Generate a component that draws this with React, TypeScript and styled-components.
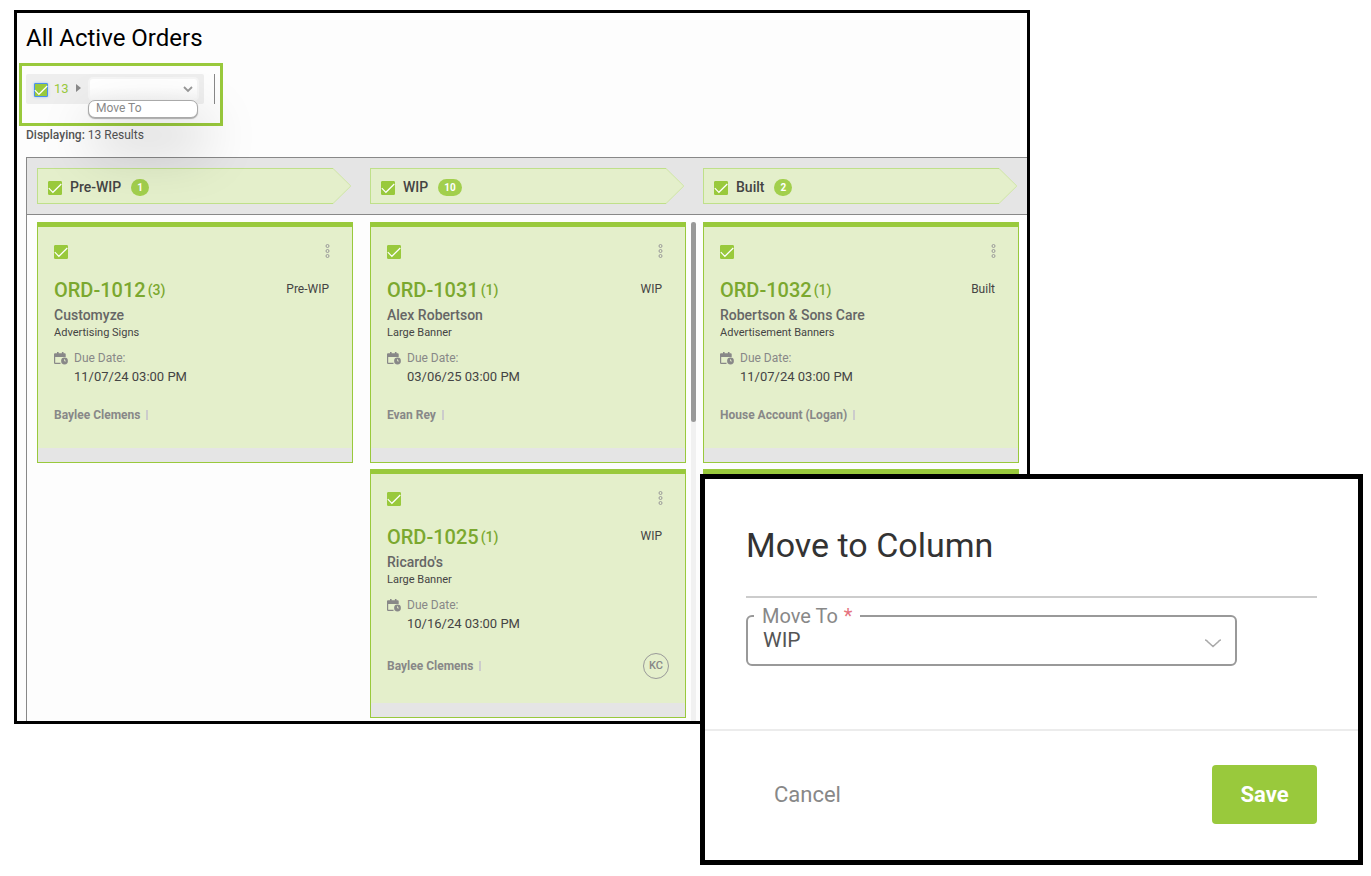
import React from "react";
import styled, { createGlobalStyle } from "styled-components";

const GlobalStyle = createGlobalStyle`
  *, *::before, *::after { box-sizing: border-box; }
  body {
    margin: 0;
    background: #fff;
    color: #444;
    font-family: Roboto, "Liberation Sans", sans-serif;
    font-size: 12px;
  }
  button, select, input { font: inherit; }
`;

const green = "#99c93c";
const paleGreen = "#e4efcb";
const softGray = "#e5e5e5";

const Page = styled.div`
  position: relative;
  min-height: 100vh;
  padding: 10px 341px 0 14px;
`;

const OrdersPanel = styled.main`
  display: flex;
  flex-direction: column;
  height: calc(100vh - 162px);
  min-height: 560px;
  border: 3px solid #000;
  background: #fdfdfd;
  padding: 10px 0 0 9px;
  overflow: hidden;
`;

const Title = styled.h1`
  margin: 0;
  color: #000;
  font-size: 24px;
  font-weight: 400;
  line-height: 30px;
`;

const Highlight = styled.section`
  display: flex;
  align-items: flex-start;
  align-self: flex-start;
  margin: 10px 0 0 -7px;
  padding: 8px 5px 19px 4px;
  border: 3px solid ${green};
`;

const BulkBar = styled.div`
  display: flex;
  align-items: center;
  height: 30px;
  padding: 0 5px 0 8px;
  border-radius: 2px;
  background: #eee;
`;

const Divider = styled.span`
  width: 1px;
  height: 30px;
  margin-left: 10px;
  background: #888;
`;

const SelectedCount = styled.span`
  width: 22px;
  margin-left: 6px;
  padding-bottom: 2px;
  color: ${green};
  font-size: 13px;
`;

const CaretIcon = styled.svg`
  width: 5px;
  height: 8px;
  margin-right: 7px;
  margin-bottom: 2px;
`;

const ActionPicker = styled.div`
  position: relative;
  display: grid;
  align-items: center;
  width: 111px;
`;

const ActionSelect = styled.select`
  grid-area: 1 / 1;
  appearance: none;
  width: 100%;
  height: 24px;
  border: 2px solid #f5f5f5;
  border-radius: 5px;
  background: linear-gradient(#fff 40%, #f7f7f7);
  color: #777;
`;

const SelectChevron = styled.svg<{ $inset: number; $lift?: number }>`
  grid-area: 1 / 1;
  justify-self: end;
  margin-right: ${(p) => p.$inset}px;
  margin-bottom: ${(p) => p.$lift ?? 0}px;
  pointer-events: none;
`;

const ActionMenu = styled.div`
  position: absolute;
  top: 23px;
  left: 0;
  z-index: 2;
  width: 110px;
  border: 1px solid #aaa;
  border-radius: 7px;
  background: #fff;
  box-shadow: 0 1px 1px #aaa, 6px 26px 54px 4px rgba(0, 0, 0, 0.22);
`;

const MenuItem = styled.button`
  display: block;
  width: 100%;
  padding: 0 7px 2px;
  border: 0;
  background: none;
  color: #888;
  line-height: 14px;
  text-align: left;
`;

const ResultCount = styled.p`
  margin: 1px 0 14px;
  line-height: 16px;
  color: #555;
  strong { font-weight: 500; }
`;

const Board = styled.section`
  display: flex;
  flex: 1;
  flex-direction: column;
  min-height: 0;
  border-top: 1px solid #888;
  border-left: 1px solid #888;
`;

const BoardGrid = styled.div`
  display: grid;
  grid-template-columns: 1fr 17px 1fr 17px 1fr;
  padding: 0 8px 0 10px;
`;

const BoardHead = styled(BoardGrid)`
  padding-top: 10px;
  padding-bottom: 10px;
  border-bottom: 1px solid #888;
  background: ${softGray};
`;

const BoardBody = styled(BoardGrid)`
  flex: 1;
  min-height: 0;
  grid-template-rows: minmax(0, 1fr);
  padding-top: 7px;
`;

const StageHeader = styled.header<{ $slot: number }>`
  grid-column: ${(p) => p.$slot};
  display: flex;
  height: 36px;
  padding-right: 1px;
`;

const StageLabel = styled.div`
  display: flex;
  flex: 1;
  align-items: center;
  padding: 2px 0 0 10px;
  border: 1px solid #bfe08a;
  border-right: 0;
  background: ${paleGreen};
`;

const StageName = styled.h2`
  margin: 0 10px 0 8px;
  font-size: 14px;
  font-weight: 500;
  line-height: 16px;
`;

const Badge = styled.span`
  padding: 0 6px;
  border-radius: 9px;
  background: #a2cf4d;
  color: #fff;
  font-size: 10px;
  font-weight: 700;
  line-height: 17px;
`;

const Column = styled.div<{ $slot: number }>`
  grid-column: ${(p) => p.$slot};
  grid-row: 1;
  display: flex;
  flex-direction: column;
  gap: 6px;
  overflow: hidden;
`;

const ScrollTrack = styled.div`
  grid-column: 4;
  grid-row: 1;
  width: 5px;
  margin-left: 5px;
  background: #f1f1f1;
`;

const ScrollThumb = styled.div`
  height: 200px;
  border-radius: 3px;
  background: #999;
`;

const Card = styled.article`
  flex: none;
  border: 1px solid ${green};
  border-top-width: 5px;
  background: ${paleGreen};
`;

const CardBody = styled.div`
  padding: 18px 16px 24px;
`;

const CardRow = styled.div`
  display: flex;
  align-items: center;
  justify-content: space-between;
  padding-right: 6px;
`;

const CardFooter = styled.div`
  height: 14px;
  background: ${softGray};
`;

const MoreButton = styled.button`
  display: flex;
  padding: 0;
  border: 0;
  background: none;
  svg { overflow: visible; }
`;

const OrderRow = styled(CardRow)`
  margin-top: 19px;
  padding-right: 7px;
  line-height: 24px;
`;

const OrderLink = styled.a`
  color: #7ba82f;
  font-size: 20px;
  font-weight: 500;
  text-decoration: none;
`;

const ItemCount = styled.span`
  margin-left: 2px;
  font-size: 14px;
  line-height: 16px;
  vertical-align: 2px;
`;

const StageTag = styled.span`
  padding-bottom: 2px;
  line-height: 16px;
`;

const Customer = styled.h3`
  margin: 5px 0 0;
  color: #666;
  font-size: 14px;
  font-weight: 500;
  line-height: 16px;
`;

const Product = styled.p`
  margin: 3px 0 0;
  font-size: 11px;
  line-height: 14px;
`;

const DueRow = styled.div`
  display: flex;
  align-items: center;
  gap: 6px;
  margin-top: 10px;
  color: #888;
  line-height: 16px;
`;

const DueDate = styled.p`
  margin: 3px 0 0 20px;
  font-size: 13px;
  line-height: 16px;
`;

const OwnerRow = styled.div`
  display: flex;
  align-items: center;
  min-height: 18px;
  margin-top: 21px;
  color: #888;
  font-weight: 700;
`;

const OwnerMark = styled.span`
  width: 2px;
  height: 10px;
  margin-left: 6px;
  background: #ccc;
`;

const Avatar = styled.span`
  width: 26px;
  height: 26px;
  margin-left: auto;
  border: 1px solid #999;
  border-radius: 50%;
  font-size: 11px;
  font-weight: 500;
  line-height: 24px;
  text-align: center;
`;

const CheckWrap = styled.span<{ $inBar?: boolean }>`
  display: grid;
  width: 14px;
  height: 14px;
  margin-top: ${(p) => (p.$inBar ? 2 : 0)}px;
  svg { grid-area: 1 / 1; pointer-events: none; z-index: 1; }
`;

const CheckInput = styled.input<{ $focused?: boolean }>`
  grid-area: 1 / 1;
  appearance: none;
  width: 14px;
  height: 14px;
  margin: 0;
  border: 1px solid ${(p) => (p.$focused ? "#4a90f0" : green)};
  border-radius: 1px;
  background: ${green};
  box-shadow: ${(p) => (p.$focused ? "0 0 3px #9cc0f0" : "none")};
`;

const Dialog = styled.div`
  position: absolute;
  top: 474px;
  left: 700px;
  right: 8px;
  z-index: 3;
  border: 5px solid #000;
  background: #fff;
`;

const DialogBody = styled.div`
  padding: 46px 41px 63px;
`;

const DialogTitle = styled.h2`
  margin: 0;
  padding-bottom: 31px;
  border-bottom: 2px solid #ccc;
  color: #333;
  font-size: 34px;
  font-weight: 400;
  line-height: 40px;
`;

const Field = styled.fieldset`
  display: grid;
  align-items: center;
  min-width: 0;
  margin: 7px 80px 0 0;
  padding: 0 6px;
  border: 2px solid #999;
  border-radius: 6px;
`;

const Legend = styled.legend`
  padding: 0 8px;
  color: #888;
  font-size: 20px;
  line-height: 22px;
`;

const Required = styled.span`
  margin-left: 6px;
  color: #e57380;
`;

const ColumnSelect = styled.select`
  grid-area: 1 / 1;
  appearance: none;
  width: 100%;
  height: 37px;
  padding: 0 32px 12px 9px;
  border: 0;
  background: none;
  color: #555;
  font-size: 21px;
`;

const DialogFooter = styled.div`
  display: flex;
  align-items: center;
  justify-content: space-between;
  padding: 34px 41px 36px 69px;
  border-top: 2px solid #ececec;
`;

const CancelButton = styled.button`
  padding: 0;
  border: 0;
  background: none;
  color: #888;
  font-size: 22px;
`;

const SaveButton = styled.button`
  width: 105px;
  height: 59px;
  border: 0;
  border-radius: 4px;
  background: ${green};
  color: #fff;
  font-size: 22px;
  font-weight: 700;
`;

type Order = {
  id: string;
  count: number;
  customer: string;
  product: string;
  due: string;
  owner: string;
  assignee?: string;
};

type Stage = { name: string; total: number; orders: Order[] };

const stages: Stage[] = [
  {
    name: "Pre-WIP",
    total: 1,
    orders: [
      { id: "ORD-1012", count: 3, customer: "Customyze", product: "Advertising Signs", due: "11/07/24 03:00 PM", owner: "Baylee Clemens" },
    ],
  },
  {
    name: "WIP",
    total: 10,
    orders: [
      { id: "ORD-1031", count: 1, customer: "Alex Robertson", product: "Large Banner", due: "03/06/25 03:00 PM", owner: "Evan Rey" },
      { id: "ORD-1025", count: 1, customer: "Ricardo's", product: "Large Banner", due: "10/16/24 03:00 PM", owner: "Baylee Clemens", assignee: "KC" },
    ],
  },
  {
    name: "Built",
    total: 2,
    orders: [
      { id: "ORD-1032", count: 1, customer: "Robertson & Sons Care", product: "Advertisement Banners", due: "11/07/24 03:00 PM", owner: "House Account (Logan)" },
    ],
  },
];

function Check({ label, focused, inBar }: { label: string; focused?: boolean; inBar?: boolean }) {
  return (
    <CheckWrap $inBar={inBar}>
      <CheckInput type="checkbox" defaultChecked aria-label={label} $focused={focused} />
      <svg width="14" height="14" viewBox="0 0 14 14" fill="none" stroke="#fff" strokeWidth="1.2" aria-hidden="true">
        <path d="M.8 7.200 4.900 11.300 13.300 3" />
      </svg>
    </CheckWrap>
  );
}

function DueIcon() {
  return (
    <svg width="14" height="13" viewBox="0 0 14 13" aria-hidden="true">
      <path d="M3 0h1.6v1.2h3.3V0h1.6v1.2h1.2q1 0 1 1V5H1.2v5.7h5.3V12H1.2Q0 12 0 10.8V2.2q0-1 1-1h2z" fill="#888" />
      <circle cx="10.5" cy="9" r="3.4" fill="#888" />
      <path d="M10.5 7.2V9h1.4" fill="none" stroke={paleGreen} strokeWidth="0.8" />
    </svg>
  );
}

function OrderCard({ order, stage }: { order: Order; stage: string }) {
  return (
    <Card>
      <CardBody>
        <CardRow>
          <Check label={`Select ${order.id}`} />
          <MoreButton aria-label={`Actions for ${order.id}`}>
            <svg width="5" height="14" viewBox="0 1 5 14" fill="none" stroke="#999">
              <circle cx="2.5" cy="2" r="1.5" />
              <circle cx="2.5" cy="7" r="1.5" />
              <circle cx="2.5" cy="12" r="1.5" />
            </svg>
          </MoreButton>
        </CardRow>
        <OrderRow>
          <OrderLink href="#">
            {order.id}
            <ItemCount>({order.count})</ItemCount>
          </OrderLink>
          <StageTag>{stage}</StageTag>
        </OrderRow>
        <Customer>{order.customer}</Customer>
        <Product>{order.product}</Product>
        <DueRow>
          <DueIcon />
          <span>Due Date:</span>
        </DueRow>
        <DueDate>{order.due}</DueDate>
        <OwnerRow>
          {order.owner}
          <OwnerMark />
          {order.assignee && <Avatar>{order.assignee}</Avatar>}
        </OwnerRow>
      </CardBody>
      <CardFooter />
    </Card>
  );
}

export default function App() {
  return (
    <Page>
      <GlobalStyle />
      <OrdersPanel>
        <Title>All Active Orders</Title>
        <Highlight>
          <BulkBar>
            <Check label="Select all orders" focused inBar />
            <SelectedCount>13</SelectedCount>
            <CaretIcon viewBox="0 0 5 8" aria-hidden="true">
              <path d="M0 0 5 4 0 8z" fill="#888" />
            </CaretIcon>
            <ActionPicker>
              <ActionSelect aria-label="Bulk action" defaultValue="">
                <option value="" />
                <option value="move">Move To</option>
              </ActionSelect>
              <SelectChevron $inset={6} width="10" height="7" viewBox="0 0 10 7" fill="none" stroke="#999" strokeWidth="1.8" aria-hidden="true">
                <path d="M1 1 5 5 9 1" />
              </SelectChevron>
              <ActionMenu>
                <MenuItem>Move To</MenuItem>
              </ActionMenu>
            </ActionPicker>
          </BulkBar>
          <Divider />
        </Highlight>
        <ResultCount>
          <strong>Displaying:</strong> 13 Results
        </ResultCount>
        <Board>
          <BoardHead>
            {stages.map((stage, i) => (
              <StageHeader key={stage.name} $slot={i * 2 + 1}>
                <StageLabel>
                  <Check label={`Select all in ${stage.name}`} inBar />
                  <StageName>{stage.name}</StageName>
                  <Badge>{stage.total}</Badge>
                </StageLabel>
                <svg width="19" height="36" viewBox="0 0 19 36" aria-hidden="true">
                  <path d="M0 .5 17.800 18 0 35.5" fill={paleGreen} stroke="#cfe5a5" />
                </svg>
              </StageHeader>
            ))}
          </BoardHead>
          <BoardBody>
            {stages.map((stage, i) => (
              <Column key={stage.name} $slot={i * 2 + 1}>
                {stage.orders.map((order) => (
                  <OrderCard key={order.id} order={order} stage={stage.name} />
                ))}
                {stage.total > stage.orders.length && (
                  <Card>
                    <CardBody />
                  </Card>
                )}
              </Column>
            ))}
            <ScrollTrack>
              <ScrollThumb />
            </ScrollTrack>
          </BoardBody>
        </Board>
      </OrdersPanel>
      <Dialog role="dialog" aria-labelledby="move-title">
        <DialogBody>
          <DialogTitle id="move-title">Move to Column</DialogTitle>
          <Field>
            <Legend>
              <label htmlFor="move-column">
                Move To<Required>*</Required>
              </label>
            </Legend>
            <ColumnSelect id="move-column" defaultValue="WIP">
              {stages.map((stage) => (
                <option key={stage.name}>{stage.name}</option>
              ))}
            </ColumnSelect>
            <SelectChevron $inset={7} $lift={4} width="18" height="9" viewBox="0 0 18 9" fill="none" stroke="#aaa" strokeWidth="1.6" aria-hidden="true">
              <path d="M1 1q1.600 0 2.500 1.500L9 7.500l5.500-5Q15.400 1 17 1" />
            </SelectChevron>
          </Field>
        </DialogBody>
        <DialogFooter>
          <CancelButton>Cancel</CancelButton>
          <SaveButton>Save</SaveButton>
        </DialogFooter>
      </Dialog>
    </Page>
  );
}
